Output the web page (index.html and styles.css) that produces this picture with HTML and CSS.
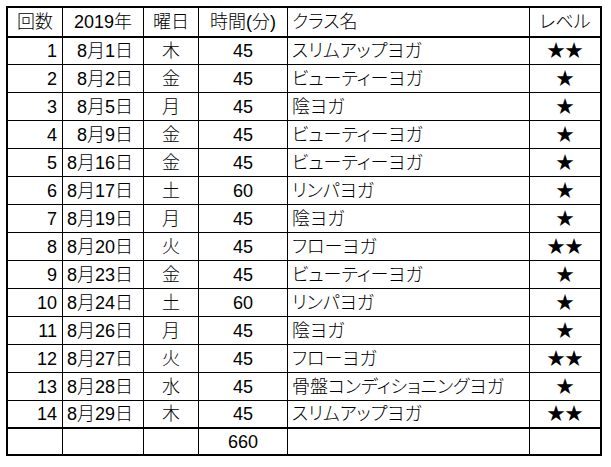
FILE: index.html
```html
<!DOCTYPE html>
<html lang="ja">
<head>
<meta charset="utf-8">
<link rel="stylesheet" href="styles.css">
</head>
<body>
<div class="sheet">
  <div class="c hd">回数</div><div class="c hd">2019年</div><div class="c hd">曜日</div><div class="c hd">時間(分)</div><div class="c hd l">クラス名</div><div class="c hd last">レベル</div>

  <div class="c n">1</div><div class="c d">8月1日</div><div class="c m">木</div><div class="c m">45</div><div class="c l">スリムアップヨガ</div><div class="c m last">★★</div>
  <div class="c n">2</div><div class="c d">8月2日</div><div class="c m">金</div><div class="c m">45</div><div class="c l">ビューティーヨガ</div><div class="c m last">★</div>
  <div class="c n">3</div><div class="c d">8月5日</div><div class="c m">月</div><div class="c m">45</div><div class="c l">陰ヨガ</div><div class="c m last">★</div>
  <div class="c n">4</div><div class="c d">8月9日</div><div class="c m">金</div><div class="c m">45</div><div class="c l">ビューティーヨガ</div><div class="c m last">★</div>
  <div class="c n">5</div><div class="c d">8月16日</div><div class="c m">金</div><div class="c m">45</div><div class="c l">ビューティーヨガ</div><div class="c m last">★</div>
  <div class="c n">6</div><div class="c d">8月17日</div><div class="c m">土</div><div class="c m">60</div><div class="c l">リンパヨガ</div><div class="c m last">★</div>
  <div class="c n">7</div><div class="c d">8月19日</div><div class="c m">月</div><div class="c m">45</div><div class="c l">陰ヨガ</div><div class="c m last">★</div>
  <div class="c n">8</div><div class="c d">8月20日</div><div class="c m">火</div><div class="c m">45</div><div class="c l">フローヨガ</div><div class="c m last">★★</div>
  <div class="c n">9</div><div class="c d">8月23日</div><div class="c m">金</div><div class="c m">45</div><div class="c l">ビューティーヨガ</div><div class="c m last">★</div>
  <div class="c n">10</div><div class="c d">8月24日</div><div class="c m">土</div><div class="c m">60</div><div class="c l">リンパヨガ</div><div class="c m last">★</div>
  <div class="c n">11</div><div class="c d">8月26日</div><div class="c m">月</div><div class="c m">45</div><div class="c l">陰ヨガ</div><div class="c m last">★</div>
  <div class="c n">12</div><div class="c d">8月27日</div><div class="c m">火</div><div class="c m">45</div><div class="c l">フローヨガ</div><div class="c m last">★★</div>
  <div class="c n">13</div><div class="c d">8月28日</div><div class="c m">水</div><div class="c m">45</div><div class="c l">骨盤コンディショニングヨガ</div><div class="c m last">★</div>
  <div class="c n end">14</div><div class="c d end">8月29日</div><div class="c m end">木</div><div class="c m end">45</div><div class="c l end">スリムアップヨガ</div><div class="c m last end">★★</div>

  <div class="c tot"></div><div class="c tot"></div><div class="c tot"></div><div class="c m tot">660</div><div class="c tot"></div><div class="c last tot"></div>
</div>
</body>
</html>
```

FILE: styles.css
```css
* { box-sizing: border-box; }
html, body { margin: 0; padding: 0; background: #fff; }
body { padding: 6px 0 0 6px; }

.sheet {
  display: grid;
  grid-template-columns: 55px 81px 55px 89px 242px 70px;
  grid-template-rows: 30px 27px repeat(13, 28px) 25px;
  width: 596px;
  border: 2px solid #000;
  font-family: "Liberation Sans", "Noto Sans CJK JP", sans-serif;
  font-feature-settings: "palt";
  font-size: 18px;
  font-weight: 300;
  line-height: 1;
  color: #000;
}

.c {
  display: flex;
  align-items: center;
  border-right: 1px solid #000;
  border-bottom: 1px solid #000;
  white-space: nowrap;
  overflow: hidden;
}
.c.last { border-right: none; }

.hd { justify-content: center; border-bottom: 2px solid #000; }
.hd.l { justify-content: flex-start; padding-left: 4px; }

.n { justify-content: flex-end; padding-right: 5px; }
.d { justify-content: flex-end; padding-right: 10px; }
.m { justify-content: center; }
.l { justify-content: flex-start; padding-left: 4px; }

.end { border-bottom: 2px solid #000; }
.tot { border-bottom: none; }
```
